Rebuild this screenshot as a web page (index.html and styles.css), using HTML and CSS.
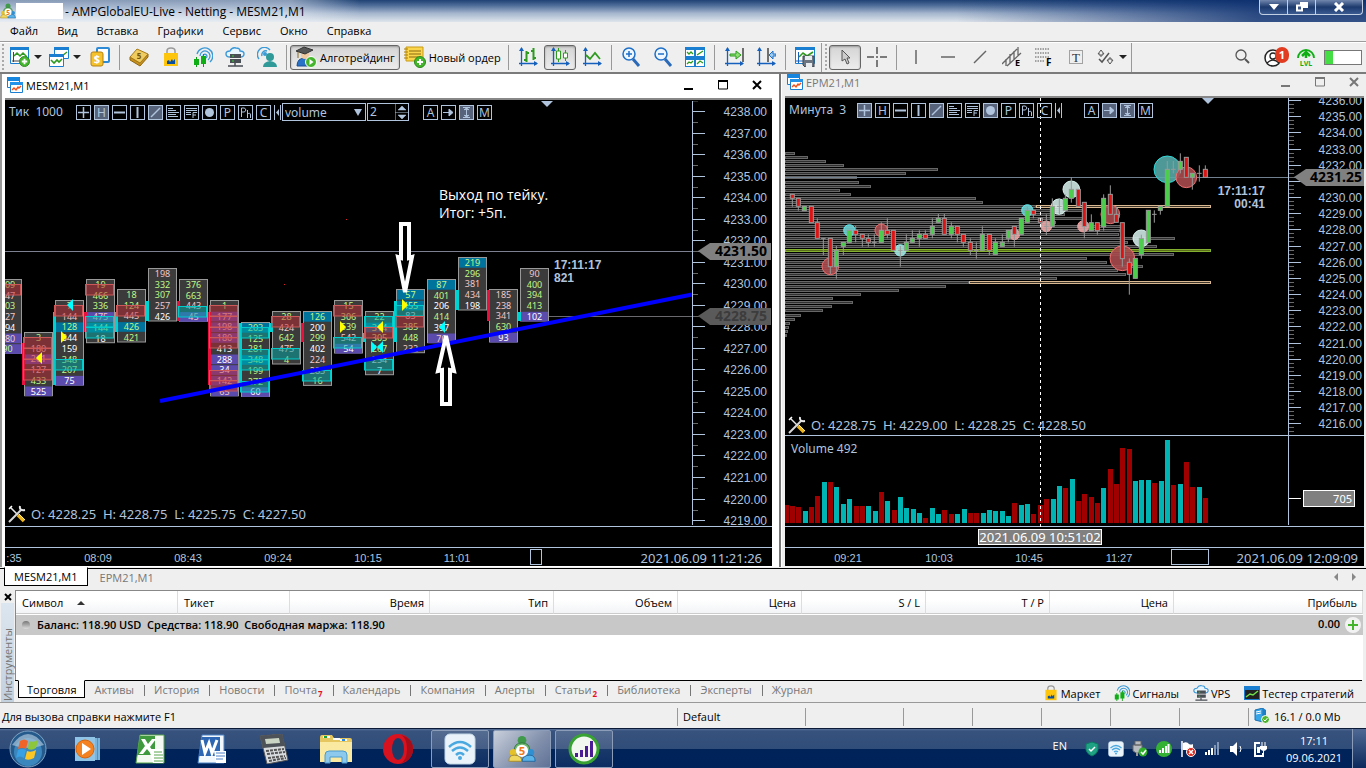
FILE: index.html
```html
<!DOCTYPE html>
<html lang="ru">
<head>
  <meta charset="UTF-8">
  <meta name="viewport" content="width=device-width, initial-scale=1.0">
  <title>AMPGlobalEU-Live - Netting - MESM21,M1</title>
  <link rel="stylesheet" href="styles.css">
</head>
<body>
  <!-- shared icons -->
  <svg class="defs" width="0" height="0">
    <symbol id="i-mt5" viewBox="0 0 32 32">
      <circle cx="16" cy="6" r="5" fill="#3f9a4a"/><path d="M7 18q0-9 9-9t9 9l-4 4H11z" fill="#6db86e" stroke="#2d7538"/>
      <circle cx="6" cy="20" r="4" fill="#e6c22a"/><path d="M1 30q0-7 6-7 8 0 9 7z" fill="#f0d860" stroke="#a8871a"/>
      <circle cx="26" cy="20" r="4" fill="#2f8fd0"/><path d="M31 30q0-7-6-7-8 0-9 7z" fill="#5ab4ea" stroke="#1b649c"/>
      <circle cx="16" cy="18" r="7" fill="#fff"/><text x="16" y="23" font-size="13" font-weight="bold" fill="#f07818" text-anchor="middle">5</text>
    </symbol>
    <symbol id="i-win" viewBox="0 0 16 16">
      <path d="M.5 1.500h12v9H.5z" fill="#fff" stroke="#1a7fd0"/><path d="M0 0h13v4H0z" fill="#1585dd"/>
      <path d="M3.500 5.500h12v10h-12z" fill="#fff" stroke="#1a7fd0"/><path d="M3 5h13v3H3z" fill="#2393ea"/>
      <path d="M5 13l2-2 2 2 2-3 1 1 2-2" fill="none" stroke="#f0501a" stroke-width="1.400"/>
    </symbol>
    <symbol id="i-bag" viewBox="0 0 20 20">
      <path d="M6 8V4q0-3 4-3t4 3v4" fill="none" stroke="#9a9a9a" stroke-width="1.500"/>
      <path d="M3 6h14v13H3z" fill="#fdc50c"/><path d="M6 17v-3l2-1 1 2 2-3 1 2 2-2v5z" fill="#0b4fa0"/>
    </symbol>
    <symbol id="i-signal" viewBox="0 0 20 20">
      <path d="M4 7a8 8 0 1 1 13 8M7 9a5 5 0 1 1 8 4M10 9a2 2 0 1 1 3 2" fill="none" stroke="#3c9ad6" stroke-width="1.300"/>
      <path d="M3.500 10v10M10.500 7v13" stroke="#0a9a12"/><path d="M1 12h5v6H1zM8 9h5v8H8z" fill="#0fae14"/>
    </symbol>
    <symbol id="i-cloud" viewBox="0 0 20 20">
      <path d="M5 10q-4 0-4-3t4-3q2-4 6-3 4 0 4 3 4 0 4 3t-4 3" fill="#e8f5fd" stroke="#3b98d8" stroke-width="1.400"/>
      <path d="M5 7h11v4H5zM5 12h11v4H5z" fill="#4a4f55"/><path d="M7 9h2M7 14h2" stroke="#36d336"/><path d="M10 16v3M3 19h15" stroke="#4a4f55" stroke-width="1.500"/>
    </symbol>
    <symbol id="i-plus" viewBox="0 0 12 12">
      <circle cx="6" cy="6" r="5.500" fill="#45b52e" stroke="#2c8a1c"/><path d="M6 3v6M3 6h6" stroke="#fff" stroke-width="2"/>
    </symbol>
    <symbol id="i-tools" viewBox="0 0 18 18">
      <path d="M2 2l8 8" stroke="#e8e8e8" stroke-width="1.500"/><path d="M10 10l6 6" stroke="#f0b41c" stroke-width="3.500"/><path d="M11 9l6 6" stroke="#fff0a0"/>
      <path d="M1 17L13 5" stroke="#d8d8d8" stroke-width="2"/><path d="M12 1q-1 5 5 4" fill="none" stroke="#e8e8e8" stroke-width="2"/><path d="M1 4l3-3" stroke="#fff" stroke-width="1.500"/>
    </symbol>
    <symbol id="i-wifi" viewBox="0 0 32 32">
      <rect x="1" y="1" width="30" height="30" rx="5" fill="#eaf3fa" stroke="#c3d8e8"/>
      <path d="M5 14q11-10 22 0M8 18q8-7 16 0M12 22q4-4 8 0" fill="none" stroke="#4aa8e0" stroke-width="2.500"/><circle cx="16" cy="25" r="2" fill="#4aa8e0"/>
    </symbol>
    <symbol id="i-level" viewBox="0 0 32 32">
      <circle cx="16" cy="16" r="14" fill="#f2f7ef" stroke="#38a332" stroke-width="3"/>
      <path d="M7 20h3v4H7zM12 17h3v7h-3zM17 13h3v11h-3zM22 8h3v16h-3z" fill="#4a1d96"/>
    </symbol>
    <symbol id="axes" viewBox="0 0 20 20">
      <path d="M3.500 1v18M1 16.500h18" stroke="#1560bd" stroke-width="1.300"/><path d="M1 4l2.500-4L6 4zM16 14l4 2.500-4 2.500z" fill="#1560bd"/>
    </symbol>
  </svg>

  <header class="titlebar">
    <svg class="ico16"><use href="#i-mt5"/></svg>
    <span class="account"></span>
    <span class="caption">- AMPGlobalEU-Live - Netting - MESM21,M1</span>
    <div class="sysbuttons">
      <button aria-label="Свернуть"><svg width="12" height="10"><path d="M1 2h10L6 8z" fill="#fff"/></svg></button>
      <button aria-label="Восстановить"><svg width="12" height="10"><path d="M4 0h8v6H4z" fill="#fff"/><path d="M1 3.500h5v5H1z" fill="#405a88" stroke="#fff" stroke-width="2"/></svg></button>
      <button class="sys-close" aria-label="Закрыть"><svg width="12" height="10"><path d="M2 1l8 8M10 1L2 9" stroke="#fff" stroke-width="3"/></svg></button>
    </div>
  </header>

  <nav class="menu">
    <button>Файл</button>
    <button>Вид</button>
    <button>Вставка</button>
    <button>Графики</button>
    <button>Сервис</button>
    <button>Окно</button>
    <button>Справка</button>
  </nav>

  <div class="toolbar">
    <span class="grip"></span>
    <button class="tool drop" aria-label="Новый график"><svg class="ico20" viewBox="0 0 20 20"><path d="M.5 1.500h18v15H.5z" fill="#fff" stroke="#1a7fd0"/><path d="M0 0h19v3H0z" fill="#1a7fd0"/><path d="M3.500 5v10M2 14h14" stroke="#444"/><path d="M4 9l3-3 3 3 3-3 4 4" fill="none" stroke="#2f9a20" stroke-width="1.500"/><use href="#i-plus" x="9" y="9" width="11" height="11"/></svg><i class="caret"></i></button>
    <button class="tool drop" aria-label="Профили"><svg class="ico20" viewBox="0 0 20 20"><path d="M5.500.5h14v11h-14z" fill="#fff" stroke="#1a7fd0"/><path d="M5 0h15v3H5z" fill="#1a7fd0"/><path d="M13 9l5-4" stroke="#2f9a20" stroke-width="1.500"/><path d="M.5 7.500h14v12H.5z" fill="#fff" stroke="#1a7fd0"/><path d="M0 7h15v3H0z" fill="#1a7fd0"/><path d="M2 13l3 3 3-3 2 2 3-3" fill="none" stroke="#2f9a20" stroke-width="1.600"/></svg><i class="caret"></i></button>
    <button class="tool" aria-label="Обзор рынка"><svg class="ico20" viewBox="0 0 20 20"><rect x="7" y="1" width="12" height="14" rx="1" fill="#fff" stroke="#2e8ad4" stroke-width="2"/><rect x="1" y="5" width="12" height="14" rx="2" fill="#f4c22c" stroke="#b98210"/><text x="7" y="16" font-size="11" font-weight="bold" fill="#fff" text-anchor="middle">$</text></svg></button>
    <span class="sep"></span>
    <button class="tool" aria-label="MQL5"><svg class="ico20" viewBox="0 0 20 20"><path d="M1 13l10 6 8-9v-3l-8 9-10-6z" fill="#c8901c" stroke="#8d6712"/><path d="M1 10l7-8 11 5-8 9z" fill="#f0cc60" stroke="#a87c1a"/><text x="10" y="12" font-size="8" font-weight="bold" fill="#7a5408" text-anchor="middle">5</text></svg></button>
    <button class="tool" aria-label="Маркет"><svg class="ico20"><use href="#i-bag"/></svg></button>
    <button class="tool" aria-label="Сигналы"><svg class="ico20"><use href="#i-signal"/></svg></button>
    <button class="tool" aria-label="VPS"><svg class="ico20"><use href="#i-cloud"/></svg></button>
    <button class="tool" aria-label="Сообщество"><svg class="ico20" viewBox="0 0 20 20"><path d="M2 12A7 7 0 1 1 13 3M5 9a4 4 0 0 1 5-5" fill="none" stroke="#3c9ad6" stroke-width="1.400"/><circle cx="8" cy="7" r="2" fill="#3c9ad6"/><circle cx="13" cy="10" r="4" fill="#2f9a98"/><path d="M6 20q0-5 7-6 7 1 7 6z" fill="#2f9a98"/></svg></button>
    <span class="sep"></span>
    <button class="tool wide on"><svg class="ico22" viewBox="0 0 22 22"><path d="M2 20q0-8 8-8 7 0 7 8z" fill="#2872c8" stroke="#1b4f94"/><circle cx="10" cy="9" r="4" fill="#f0c9a0"/><path d="M1 5l8-4 9 3-8 4z" fill="#555" stroke="#333"/><path d="M3 6v6" stroke="#8a6a20"/><circle cx="16" cy="16" r="5.500" fill="#45b52e" stroke="#fff"/><path d="M14.500 13v6l4-3z" fill="#fff"/></svg>Алготрейдинг</button>
    <button class="tool wide"><svg class="ico22" viewBox="0 0 22 22"><path d="M2 1h17v14H2z" fill="#fbd64c" stroke="#c99a14"/><path d="M5 5h12M5 8h12M5 11h9" stroke="#8a6a10"/><path d="M0 3h4M0 6h4M0 9h4M0 12h4" stroke="#a67c10"/><use href="#i-plus" x="10" y="10" width="12" height="12"/></svg>Новый ордер</button>
    <span class="sep"></span>
    <button class="tool" aria-label="Бары"><svg class="ico20" viewBox="0 0 20 20"><use href="#axes"/><path d="M8.500 4v11M6 13h2.500M8.500 6H11M15.500 1v12M13 4h2.500M15.500 11H18" stroke="#2f9a20" stroke-width="2"/></svg></button>
    <button class="tool on" aria-label="Свечи"><svg class="ico20" viewBox="0 0 20 20"><use href="#axes"/><path d="M8.500 1v14M15.500 3v11" stroke="#2f9a20"/><path d="M6.500 4h4v8h-4zM13.500 6h4v5h-4z" fill="#fff" stroke="#2f9a20"/></svg></button>
    <button class="tool" aria-label="Линия"><svg class="ico20" viewBox="0 0 20 20"><use href="#axes"/><path d="M4 8l4 4 5-6 5 6" fill="none" stroke="#2f9a20" stroke-width="1.800"/></svg></button>
    <span class="sep"></span>
    <button class="tool" aria-label="Увеличить"><svg class="ico20" viewBox="0 0 20 20"><path d="M12 12l6 7" stroke="#2a6ab8" stroke-width="3"/><circle cx="8" cy="7" r="6" fill="#eef7ff" stroke="#1e6fc8" stroke-width="1.500"/><path d="M8 4v6M5 7h6" stroke="#1e6fc8" stroke-width="1.500"/></svg></button>
    <button class="tool" aria-label="Уменьшить"><svg class="ico20" viewBox="0 0 20 20"><path d="M12 12l6 7" stroke="#2a6ab8" stroke-width="3"/><circle cx="8" cy="7" r="6" fill="#eef7ff" stroke="#1e6fc8" stroke-width="1.500"/><path d="M5 7h6" stroke="#1e6fc8" stroke-width="1.500"/></svg></button>
    <button class="tool" aria-label="Плитка"><svg class="ico20" viewBox="0 0 20 20"><path d="M0 0h20v20H0z" fill="#1a7fd0"/><path d="M1 3h8v6H1zM11 3h8v6h-8zM1 13h8v6H1zM11 13h8v6h-8z" fill="#fff"/><path d="M2 5l2 2 2-2 2 2M12 8l3-2 3-2M2 17l2-2 2 1 2-2M12 17l3-3 3 2" fill="none" stroke="#2f9a20" stroke-width="1.300"/></svg></button>
    <span class="sep"></span>
    <button class="tool" aria-label="Автопрокрутка"><svg class="ico20" viewBox="0 0 20 20"><use href="#axes"/><path d="M19 1v14" stroke="#444" stroke-width="1.500"/><path d="M6 7h6V4l5 4-5 4V9H6z" fill="#8be070" stroke="#2f9a20"/></svg></button>
    <button class="tool" aria-label="Сдвиг графика"><svg class="ico20" viewBox="0 0 20 20"><use href="#axes"/><path d="M12 1v14" stroke="#444" stroke-width="1.500"/><path d="M20 7h-3V4l-4 4 4 4V9h3z" fill="#9cccf4" stroke="#1e6fc8"/></svg></button>
    <span class="sep"></span>
    <button class="tool" aria-label="Шаблоны"><svg class="ico20" viewBox="0 0 20 20"><path d="M.5 1.500h19v15H.5z" fill="#fff" stroke="#1a7fd0"/><path d="M0 0h20v3H0z" fill="#1a7fd0"/><path d="M3.500 5v11M1 14h8" stroke="#1560bd"/><path d="M4 10l4-4 4 3 6-4" fill="none" stroke="#2f9a20" stroke-width="1.600"/><path d="M8 9h11v11H10l-2-2z" fill="#6d7680" stroke="#3e464d"/><path d="M10 9h7v4h-7zM11 16h6v4h-6z" fill="#e8ecef"/></svg></button>
    <span class="bar-end"></span>
    <span class="grip"></span>
    <button class="tool on" aria-label="Курсор"><svg class="ico20" viewBox="0 0 20 20"><path d="M7 3v11l3-2 2 5 2-1-2-5h3z" fill="#ccc" stroke="#555"/></svg></button>
    <button class="tool" aria-label="Перекрестие"><svg class="ico20" viewBox="0 0 20 20"><path d="M10 0v7M10 13v7M0 10h7M13 10h7M9 10h2" stroke="#555" stroke-width="1.500"/></svg></button>
    <span class="sep"></span>
    <button class="tool" aria-label="Вертикальная линия"><svg class="ico20" viewBox="0 0 20 20"><path d="M10 3v14" stroke="#666" stroke-width="1.500"/></svg></button>
    <button class="tool" aria-label="Горизонтальная линия"><svg class="ico20" viewBox="0 0 20 20"><path d="M3 10h14" stroke="#666" stroke-width="1.500"/></svg></button>
    <button class="tool" aria-label="Трендовая линия"><svg class="ico20" viewBox="0 0 20 20"><path d="M4 16L16 4" stroke="#666" stroke-width="1.500"/></svg></button>
    <button class="tool" aria-label="Канал"><svg class="ico20" viewBox="0 0 20 20"><path d="M0 17L15 2M5 19L19 6M4 12v7M8 7v9M12 4v8M16 0v8" stroke="#666" stroke-width="1.300"/><text x="13" y="19" font-size="9" font-weight="bold">E</text></svg></button>
    <button class="tool" aria-label="Фибоначчи"><svg class="ico20" viewBox="0 0 20 20"><path d="M1 2h15M1 6h15M1 10h15M1 14h9" stroke="#555" stroke-dasharray="1.500 1"/><text x="12" y="19" font-size="10" font-weight="bold">F</text></svg></button>
    <button class="tool" aria-label="Текст"><svg class="ico20" viewBox="0 0 20 20"><path d="M3.500 3.500h13v13h-13z" fill="none" stroke="#555" stroke-dasharray="1 1"/><text x="10" y="15" font-size="13" font-family="Liberation Serif" text-anchor="middle" fill="#333">T</text></svg></button>
    <button class="tool drop" aria-label="Объекты"><svg class="ico20" viewBox="0 0 20 20"><path d="M6 3l3 4H7v2H5V7H3zM15 17l-3-4h2v-2h2v2h2z" fill="#eee" stroke="#555"/><path d="M4 12l3 3 7-9" fill="none" stroke="#555" stroke-width="1.500"/></svg><i class="caret"></i></button>
    <span class="bar-end"></span>
    <span class="spacer"></span>
    <button class="tool" aria-label="Поиск"><svg class="ico20" viewBox="0 0 20 20"><circle cx="9" cy="8" r="5" fill="none" stroke="#555" stroke-width="1.300"/><path d="M13 12l4 4" stroke="#555" stroke-width="2"/></svg></button>
    <button class="tool notify"><svg class="ico20" viewBox="0 0 20 20"><circle cx="9" cy="11" r="8" fill="#fff" stroke="#222" stroke-width="1.500"/><circle cx="9" cy="9" r="3" fill="none" stroke="#222" stroke-width="1.300"/><path d="M3 16q6-6 12 0" fill="none" stroke="#222" stroke-width="1.300"/></svg><span class="badge">1</span></button>
    <button class="tool" aria-label="Уровень"><svg class="ico20" viewBox="0 0 20 20"><path d="M2 11a8 8 0 1 1 16 0" fill="none" stroke="#0fae14" stroke-width="1.800"/><path d="M10 11V6M6 9l4-4 4 4" fill="none" stroke="#0fae14" stroke-width="2.500"/><text x="10" y="19" font-size="7" font-weight="bold" fill="#0fae14" text-anchor="middle">LVL</text></svg></button>
    <span class="battery"><i></i></span>
  </div>

  <main class="workspace">
    <section class="window active">
      <div class="window-title">
        <svg class="ico16"><use href="#i-win"/></svg><span>MESM21,M1</span>
        <div class="window-buttons">
          <button aria-label="Свернуть"><svg width="12" height="12"><path d="M1 10h9" stroke="currentColor" stroke-width="2"/></svg></button>
          <button aria-label="Развернуть"><svg width="12" height="12"><path d="M1.500 1v9h9V1" fill="none" stroke="currentColor"/><path d="M1 2h10" stroke="currentColor" stroke-width="2"/></svg></button>
          <button aria-label="Закрыть"><svg width="12" height="12"><path d="M2 2l8 8M10 2l-8 8" stroke="currentColor" stroke-width="2"/></svg></button>
        </div>
      </div>
      <div class="chart">
        <svg id="cluster" viewBox="5 100 767 466" preserveAspectRatio="xMinYMin meet"></svg>
        <div class="chart-tools">
          <span class="period tick">Тик&nbsp; 1000</span>
          <span class="tool-set" data-on="1 4"></span>
          <span class="indicator"><select aria-label="Индикатор"><option>volume</option></select></span>
          <span class="stepper"><input type="text" value="2" aria-label="Значение"><svg width="13" height="17"><path d="M.5 0v17M0 8.500h13M3 6h8L7 2zM3 11h8l-4 4z" fill="#b0c4de" stroke="#b0c4de" stroke-width=".5"/></svg></span>
          <span class="tool-set mode" data-on="13"></span>
        </div>
        <div class="ohlc"><svg class="ico18"><use href="#i-tools"/></svg><span>O: 4228.25&nbsp; H: 4228.75&nbsp; L: 4225.75&nbsp; C: 4227.50</span></div>
      </div>
    </section>

    <section class="window">
      <div class="window-title">
        <svg class="ico16"><use href="#i-win"/></svg><span>EPM21,M1</span>
        <div class="window-buttons">
          <button aria-label="Свернуть"><svg width="12" height="12"><path d="M1 10h9" stroke="currentColor" stroke-width="2"/></svg></button>
          <button aria-label="Развернуть"><svg width="12" height="12"><path d="M1.500 1v9h9V1" fill="none" stroke="currentColor"/><path d="M1 2h10" stroke="currentColor" stroke-width="2"/></svg></button>
          <button aria-label="Закрыть"><svg width="12" height="12"><path d="M2 2l8 8M10 2l-8 8" stroke="currentColor" stroke-width="2"/></svg></button>
        </div>
      </div>
      <div class="chart">
        <svg id="candles" viewBox="785 98 579 468" preserveAspectRatio="xMinYMin meet"></svg>
        <div class="chart-tools">
          <span class="period minute">Минута&nbsp; 3</span>
          <span class="tool-set" data-on="0 4 7"></span>
          <span class="tool-set mode" data-on="12 13"></span>
        </div>
        <div class="ohlc raised"><svg class="ico18"><use href="#i-tools"/></svg><span>O: 4228.75&nbsp; H: 4229.00&nbsp; L: 4228.25&nbsp; C: 4228.50</span></div>
      </div>
    </section>
  </main>

  <div class="chart-tabs">
    <button class="current">MESM21,M1</button>
    <button>EPM21,M1</button>
    <span class="scroll"><i class="left"></i><i class="right"></i></span>
  </div>

  <section class="terminal">
    <aside class="side">
      <button aria-label="Закрыть"><svg width="8" height="8"><path d="M1 1l6 6M7 1L1 7" stroke="#000" stroke-width="2"/></svg></button>
      <span>Инструменты</span>
    </aside>
    <div class="terminal-body">
      <div class="table-area">
        <table>
          <colgroup><col class="w-symbol"><col class="w-ticket"><col class="w-time"><col class="w-std"><col class="w-std"><col class="w-std"><col class="w-std"><col class="w-std"><col class="w-std"><col></colgroup>
          <thead>
            <tr><th class="start">Символ<i class="sort"></i></th><th class="start">Тикет</th><th>Время</th><th>Тип</th><th>Объем</th><th>Цена</th><th>S / L</th><th>T / P</th><th>Цена</th><th>Прибыль</th></tr>
          </thead>
          <tbody>
            <tr><td colspan="9"><i class="dot"></i>Баланс: 118.90 USD&nbsp; Средства: 118.90&nbsp; Свободная маржа: 118.90</td><td class="profit">0.00<svg width="16" height="16"><circle cx="8" cy="8" r="8" fill="#f2f2f2"/><path d="M8 3v10M3 8h10" stroke="#45b52e" stroke-width="2"/></svg></td></tr>
          </tbody>
        </table>
      </div>
      <div class="terminal-tabs">
        <button class="current">Торговля</button>
        <button>Активы</button>
        <button>История</button>
        <button>Новости</button>
        <button>Почта<sub>7</sub></button>
        <button>Календарь</button>
        <button>Компания</button>
        <button>Алерты</button>
        <button>Статьи<sub>2</sub></button>
        <button>Библиотека</button>
        <button>Эксперты</button>
        <button>Журнал</button>
        <div class="services">
          <a href="#"><svg class="ico16"><use href="#i-bag"/></svg>Маркет</a>
          <a href="#"><svg class="ico16"><use href="#i-signal"/></svg>Сигналы</a>
          <a href="#"><svg class="ico16"><use href="#i-cloud"/></svg>VPS</a>
          <a href="#"><svg class="ico16" viewBox="0 0 16 16"><path d="M0 1h16v14H0z" fill="#1a7fd0"/><path d="M1 5h14v9H1z" fill="#222"/><path d="M2 12l4-3 3 1 5-4" fill="none" stroke="#6fe04a" stroke-width="1.500"/></svg>Тестер стратегий</a>
        </div>
      </div>
    </div>
  </section>

  <footer class="status">
    <span class="help">Для вызова справки нажмите F1</span>
    <span class="profile">Default</span>
    <span class="cell-l"></span>
    <span class="cell-s"></span>
    <span class="cell-s"></span>
    <span class="cell-s"></span>
    <span class="cell-s"></span>
    <span class="cell-s"></span>
    <span class="traffic"><svg class="ico16" viewBox="0 0 16 16"><path d="M1 2l8-2v14l-8-2z" fill="#35a4e8" stroke="#1b6fb0"/><path d="M9 0l3 2v12l-3 1z" fill="#1b7ec8"/><path d="M2 4l5-1M2 6l5-1" stroke="#fff"/><circle cx="11.500" cy="11.500" r="4" fill="#4fb52e" stroke="#fff"/><path d="M9.500 11.500l1.500 1.500 2.500-3" fill="none" stroke="#fff"/></svg>16.1 / 0.0 Mb</span>
  </footer>

  <div class="taskbar">
    <button class="task start" aria-label="Пуск"><svg width="38" height="38" viewBox="0 0 38 38"><circle cx="19" cy="19" r="18" fill="#245a8c" stroke="#7ea3c4"/><circle cx="19" cy="22" r="14" fill="#3b87bd"/><path d="M3 15q16-22 32 0-16 6-32 0z" fill="#a9c4da" opacity=".7"/><path d="M11 11q4-3 8 0l-2 8q-4-2-8 0z" fill="#f0642a"/><path d="M20 11q4 2 9-1l-2 8q-4 3-8 1z" fill="#8cc63a"/><path d="M9 20q4-2 8 0l-2 8q-4-3-8 0z" fill="#38a0e4"/><path d="M18 21q4 2 9-1l-2 8q-5 3-9 1z" fill="#fcc624"/></svg></button>
    <button class="task" aria-label="Проигрыватель"><svg width="28" height="28" viewBox="0 0 28 28"><path d="M8 3h18v22H8z" fill="#4b93c8"/><path d="M22 3v22M25 3v22" stroke="#a8d4f0"/><path d="M1 2h20v24H1z" fill="#8fc4e6"/><circle cx="11" cy="14" r="9" fill="#f58220" stroke="#d8640c"/><path d="M8 8v12l9-6z" fill="#fff"/></svg></button>
    <button class="task" aria-label="Excel"><svg width="30" height="30" viewBox="0 0 30 30"><path d="M5 1h24v28H1z" fill="#f4faf2" stroke="#58a54a"/><path d="M5 2h15v19H2z" fill="#3e9a3c"/><path d="M6 5l4 0 3 5 4-5h4l-6 8 5 7h-4l-4-5-4 5H4l6-8z" fill="#fff"/><path d="M14 15h14v14H18z" fill="#fff"/><path d="M19 18h8M19 21h9M19 24h9M19 27h9" stroke="#58a54a"/></svg></button>
    <button class="task" aria-label="Word"><svg width="30" height="30" viewBox="0 0 30 30"><path d="M5 1h22v28H1z" fill="#f2f7fc" stroke="#4a80c4"/><path d="M5 3h18v19H2z" fill="#2d66b2"/><path d="M5 6l3 13 4-10 3 10 5-13" fill="none" stroke="#fff" stroke-width="3"/><path d="M17 17h12v12H19z" fill="#fff"/><path d="M19 19h9M19 22h9M19 25h7" stroke="#4a80c4"/></svg></button>
    <button class="task" aria-label="Калькулятор"><svg width="30" height="30" viewBox="0 0 30 30"><path d="M1 2l22-2 6 26-21 4z" fill="#d9dcde" stroke="#555"/><path d="M1 2l22-2 3 12-22 2z" fill="#4c5257"/><path d="M6 5l14-1 1 5-14 1z" fill="#c9d4c4"/><path d="M7 17l18-2M8 20l18-2M9 24l17-2M10 27l17-3" stroke="#555" stroke-width="2" stroke-dasharray="3 1"/></svg></button>
    <button class="task" aria-label="Проводник"><svg width="32" height="30" viewBox="0 0 32 30"><path d="M0 3q0-2 2-2h10l2 3h16q2 0 2 2v21H0z" fill="#e6c65e"/><path d="M3 3h7M13 5h7M20 6h7" stroke="#fff" stroke-width="2"/><path d="M4 3h3" stroke="#17a336" stroke-width="2"/><path d="M22 6h3" stroke="#2a8be0" stroke-width="2"/><path d="M0 8h32v20H0z" fill="#fae9a0"/><path d="M5 29v-8q0-4 4-4h14q4 0 4 4v8h-5v-6H10v6z" fill="#8cc9ec" stroke="#4b9bd0"/></svg></button>
    <button class="task" aria-label="Opera"><svg width="30" height="30" viewBox="0 0 30 30"><ellipse cx="15" cy="15" rx="15" ry="15" fill="#d8121f"/><ellipse cx="15" cy="15" rx="6" ry="11" fill="#1c3a68"/><path d="M18 1q12 3 12 14T18 29q6-3 6-14T18 1z" fill="#a70d18"/></svg></button>
    <button class="task open" aria-label="Wi-Fi"><svg width="32" height="32"><use href="#i-wifi"/></svg></button>
    <button class="task open focus" aria-label="MetaTrader 5"><svg width="28" height="28"><use href="#i-mt5"/></svg></button>
    <button class="task open" aria-label="Signal"><svg width="32" height="32"><use href="#i-level"/></svg></button>
    <div class="tray">
      <span class="lang">EN</span>
      <svg class="ico16" viewBox="0 0 16 16"><path d="M8 1l6 2v6q-1 4-6 6-5-2-6-6V3z" fill="#1fa184" stroke="#0d7a62"/><path d="M5 8l2 2 4-4" fill="none" stroke="#fff" stroke-width="1.500"/></svg>
      <svg class="ico16"><use href="#i-wifi"/></svg>
      <svg class="ico16" viewBox="0 0 16 16"><path d="M3 0h6v4H3zM1 4h9v6q-4 4-9 0z" fill="#b8bcc0" stroke="#666"/><path d="M5 11v4" stroke="#999" stroke-width="2"/><circle cx="11" cy="11" r="4.500" fill="#2fae2c"/><path d="M9 11l2 2 3-4" fill="none" stroke="#fff" stroke-width="1.500"/></svg>
      <svg class="ico16" viewBox="0 0 16 16"><circle cx="8" cy="8" r="8" fill="#35b233"/><path d="M4 9v3M7 7v5M10 5v7M12.500 3v9" stroke="#fff" stroke-width="2"/></svg>
      <svg class="ico16" viewBox="0 0 16 16"><path d="M2 0v16" stroke="#fff" stroke-width="1.500"/><path d="M3 2q4-2 6 1 2 1 4 0v6H3z" fill="#fff"/><circle cx="11" cy="11" r="4.500" fill="#d8281c" stroke="#fff"/><path d="M9 9l4 4M13 9l-4 4" stroke="#fff" stroke-width="1.500"/></svg>
      <svg class="ico16" viewBox="0 0 16 16"><path d="M2 11v3M5 9v5M8 7v7" stroke="#fff" stroke-width="2"/><path d="M11 4v10M14 1v13" stroke="#8296b5" stroke-width="2"/></svg>
      <svg class="ico16" viewBox="0 0 16 16"><path d="M2 5h3l4-4v14l-4-4H2z" fill="#fff"/><path d="M12 5q2 3 0 6" fill="none" stroke="#fff"/></svg>
      <svg class="ico16" viewBox="0 0 16 16"><path d="M8 2H3v13h8v-3" fill="none" stroke="#fff" stroke-width="2"/><path d="M5 6h3v6H5z" fill="#fff"/><path d="M10 1v4M13 1v4" stroke="#fff"/><path d="M8 5h7v3q-3 4-7 0zM11 9h1v5h-1z" fill="#fff"/></svg>
      <span class="clock">17:11<br>09.06.2021</span>
    </div>
    <button class="show-desktop" aria-label="Показать рабочий стол"></button>
  </div>

  <script src="script.js"></script>
</body>
</html>
```
FILE: styles.css
```css
* {
  box-sizing: border-box;
}
body {
  margin: 0;
  height: 100vh;
  display: flex;
  flex-direction: column;
  overflow: hidden;
  background: #efefef;
  color: #000;
  font-family: "Open Sans", "Noto Sans", sans-serif;
  font-size: 11px;
}
button {
  font: inherit;
  color: inherit;
  background: none;
  border: 0;
  padding: 0;
}
a {
  color: inherit;
  text-decoration: none;
}
svg {
  flex: none;
}
.defs {
  position: absolute;
}
.ico16 {
  width: 16px;
  height: 16px;
}
.ico18 {
  width: 18px;
  height: 18px;
}
.ico20 {
  width: 20px;
  height: 20px;
}
.ico22 {
  width: 22px;
  height: 22px;
}
.spacer {
  flex: 1;
}

/* title bar */
.titlebar {
  display: flex;
  align-items: center;
  height: 22px;
  flex: none;
  font-size: 12px;
  background: linear-gradient(90deg, rgba(240, 244, 250, .5) 0, rgba(240, 244, 250, .5) 290px, rgba(240, 244, 250, 0) 360px, transparent 70%, rgba(10, 45, 110, .8) 92%), linear-gradient(#1f4274 0, #4f6d99 25%, #a4b5cd 60%, #dfe5ec 100%);
}
.account {
  width: 47px;
  height: 16px;
  background: #fff;
}
.caption {
  margin-left: 2px;
}
.sysbuttons {
  display: flex;
  align-self: flex-start;
  margin: 0 3px 0 auto;
  height: 15px;
  border: 1px solid #c3cfe2;
  border-top: 0;
  border-radius: 0 0 4px 4px;
  background: linear-gradient(#7187ad, #1d3a6e 50%, #3a5a90);
}
.sysbuttons button {
  width: 28px;
  display: flex;
  align-items: center;
  justify-content: center;
  border-right: 1px solid #c3cfe2;
}
.sysbuttons .sys-close {
  width: 46px;
  border-right: 0;
}

/* menu */
.menu {
  display: flex;
  gap: 19px;
  height: 20px;
  flex: none;
  padding: 0 0 2px 10px;
  border-bottom: 1px solid #9c9c9c;
}

/* main toolbar */
.toolbar {
  display: flex;
  align-items: center;
  height: 32px;
  flex: none;
  padding-bottom: 1px;
  border-top: 1px solid #fff;
  border-bottom: 2px solid #7b7b7b;
}
.grip {
  width: 3px;
  height: 26px;
  margin: 0 1px 0 2px;
  border-left: 2px dotted #aaa;
}
.tool {
  display: flex;
  align-items: center;
  justify-content: center;
  width: 32px;
  height: 25px;
}
.tool.drop {
  width: 39px;
  gap: 4px;
}
.tool.wide {
  width: auto;
  gap: 3px;
  padding: 0 4px;
}
.tool.on {
  border: 1px solid #666;
  border-radius: 3px;
  background: linear-gradient(#d4d4d4, #ececec);
  box-shadow: inset 0 1px 2px #999;
}
.caret {
  border: 4px solid transparent;
  border-top-color: #222;
  border-bottom: 0;
}
.sep {
  width: 1px;
  height: 25px;
  margin: 0 3px;
  background: #999;
}
.bar-end {
  width: 2px;
  height: 29px;
  border-left: 1px solid #999;
}
.notify {
  position: relative;
}
.badge {
  position: absolute;
  top: 2px;
  right: 1px;
  width: 14px;
  height: 16px;
  line-height: 16px;
  border-radius: 8px;
  background: #e23c20;
  color: #fff;
  font-weight: bold;
}
.battery {
  width: 38px;
  height: 15px;
  margin: 0 4px 0 2px;
  border: 1px solid #777;
  background: #fff;
}
.battery i {
  display: block;
  width: 8px;
  height: 13px;
  background: #44dd44;
}

/* chart windows */
.workspace {
  flex: 1;
  display: grid;
  grid-template-columns: 781fr 585fr;
  min-height: 0;
}
.window {
  display: flex;
  flex-direction: column;
  min-width: 0;
  min-height: 0;
  padding: 0 2px 1px 3px;
  color: #777;
  border-left: 1px solid #fff;
}
.window.active {
  padding: 2px 7px 1px 3px;
  background: #fff;
  color: #000;
  border-left: 2px solid #999;
  border-right: 2px solid #777;
}
.window-title {
  display: flex;
  align-items: center;
  height: 22px;
  flex: none;
  padding: 0 0 6px 2px;
}
.active .window-title {
  padding-bottom: 4px;
}
.window-title span {
  margin-left: 3px;
}
.window-buttons {
  display: flex;
  gap: 22px;
  margin: 0 4px 0 auto;
}
.active .window-buttons {
  margin-right: 9px;
}
.window-buttons button {
  width: 12px;
  height: 12px;
  display: flex;
}
.chart {
  position: relative;
  flex: 1;
  min-height: 0;
  border-top: 2px solid #888;
  background: #000;
  color: #b0c4de;
  overflow: hidden;
  font-family: "Noto Sans", "Open Sans", sans-serif;
  font-size: 13px;
}
.active .chart {
  margin-top: 0;
}
.chart > svg {
  display: block;
  width: 100%;
  height: 100%;
}
.chart-tools {
  position: absolute;
  top: 3px;
  left: 4px;
  height: 18px;
  display: flex;
  align-items: center;
  line-height: 18px;
  font-size: 12px;
}
.tick {
  width: 67px;
}
.minute {
  width: 68px;
}
.tool-set {
  display: flex;
  gap: 3px;
}
.tool-set button {
  width: 15px;
  height: 15px;
  line-height: 13px;
  border: 1px solid #b0c4de;
}
.tool-set button.on {
  background: #56637a;
}
.tool-set svg {
  display: block;
  width: 13px;
  height: 13px;
}
.tool-set .fold {
  width: 7px;
  border-width: 0 1px;
}
.tool-set .fold svg {
  width: 5px;
}
.mode {
  margin-left: 22px;
}
.stepper + .mode {
  margin-left: 14px;
}
.indicator {
  position: relative;
  margin-left: 1px;
}
.indicator::after {
  content: "";
  position: absolute;
  right: 4px;
  top: 6px;
  border: 4px solid transparent;
  border-top: 7px solid #b0c4de;
  border-bottom: 0;
}
.indicator select {
  display: block;
  appearance: none;
  width: 84px;
  height: 18px;
  padding: 0 2px;
  border: 1px solid #b0c4de;
  border-radius: 0;
  background: #000;
  color: inherit;
  font: inherit;
}
.stepper {
  display: flex;
  margin-left: 1px;
  border: 1px solid #b0c4de;
  height: 18px;
}
.stepper input {
  width: 27px;
  padding: 0 2px;
  border: 0;
  background: #000;
  color: inherit;
  font: inherit;
}
.ohlc {
  position: absolute;
  left: 3px;
  bottom: 42px;
  height: 20px;
  display: flex;
  align-items: center;
  gap: 5px;
}
.ohlc.raised {
  bottom: 131px;
}

/* chart drawing */
.price-label {
  font: 12px "Liberation Sans", sans-serif;
  fill: #b0c4de;
  text-anchor: end;
}
.time-label {
  font: 11px "Liberation Sans", sans-serif;
  fill: #b0c4de;
  text-anchor: middle;
}
.date-label {
  fill: #b0c4de;
  text-anchor: end;
}
.countdown {
  font: bold 12px "Liberation Sans", sans-serif;
  fill: #b0c4de;
}
.tag-label {
  font: bold 14px "Noto Sans", sans-serif;
  text-anchor: end;
}
.cell {
  font: 9px "Noto Sans", sans-serif;
  text-anchor: middle;
}
.note {
  font: 14px "Open Sans", sans-serif;
  fill: #fff;
}

/* chart tabs */
.chart-tabs {
  display: flex;
  height: 19px;
  flex: none;
  padding-left: 4px;
  color: #777;
  background: linear-gradient(#000, #000) 0 1px / 100% 1px no-repeat;
}
.chart-tabs button {
  padding: 0 12px;
  border-top: 1px solid transparent;
}
.chart-tabs .current {
  padding: 0 9px;
  background: #fff;
  color: #000;
  border: 1px solid #000;
  border-top-color: #fff;
}
.scroll {
  display: flex;
  gap: 14px;
  align-items: center;
  margin: 0 10px 0 auto;
}
.scroll i {
  border: 4px solid transparent;
}
.scroll .left {
  border-right-color: #888;
  border-left: 0;
}
.scroll .right {
  border-left-color: #888;
  border-right: 0;
}

/* terminal */
.terminal {
  display: flex;
  height: 117px;
  flex: none;
  padding-top: 4px;
  border-bottom: 1px solid #999;
}
.side {
  display: flex;
  flex-direction: column;
  align-items: center;
  width: 15px;
  color: #777;
}
.side button {
  height: 13px;
  line-height: 8px;
}
.side span {
  flex: 1;
  width: 13px;
  line-height: 13px;
  writing-mode: vertical-rl;
  transform: rotate(180deg);
  padding-top: 1px;
  background: linear-gradient(#c3d0de, #dce6f0);
}
.terminal-body {
  flex: 1;
  display: flex;
  flex-direction: column;
  min-width: 0;
}
.table-area {
  flex: 1;
  margin-right: 3px;
  background: #fff;
  border-top: 1px solid #888;
  border-left: 1px solid #888;
}
table {
  width: 100%;
  table-layout: fixed;
  border-collapse: separate;
  border-spacing: 0;
}
th {
  height: 23px;
  padding: 0 5px;
  font-weight: normal;
  text-align: right;
  background: linear-gradient(#fff 40%, #f2f4f6);
  border-right: 1px solid #ddd;
  border-bottom: 1px solid #ccc;
}
th.start {
  text-align: left;
  padding-left: 6px;
}
td {
  height: 21px;
  padding: 0 0 1px 6px;
  font-weight: 600;
  background: #c8c8c8;
  border-top: 1px solid #fff;
}
.profit {
  text-align: right;
  padding-right: 2px;
}
.profit svg {
  vertical-align: middle;
  margin-left: 5px;
}
.w-symbol {
  width: 162px;
}
.w-ticket {
  width: 112px;
}
.w-time {
  width: 140px;
}
.w-std {
  width: 124px;
}
.sort {
  display: inline-block;
  margin-left: 14px;
  vertical-align: 2px;
  border: 4px solid transparent;
  border-bottom-color: #333;
  border-top: 0;
}
.dot {
  display: inline-block;
  width: 8px;
  height: 8px;
  margin-right: 7px;
  border-radius: 4px;
  background: linear-gradient(#777, #ddd);
}
.terminal-tabs {
  display: flex;
  align-items: flex-start;
  height: 22px;
  margin: 0 4px 0 0;
  padding-left: 3px;
  border-top: 1px solid #000;
  color: #777;
}
.terminal-tabs button {
  height: 17px;
  padding: 0 10px 0 9px;
  white-space: nowrap;
}
.terminal-tabs button + button + button {
  padding-left: 10px;
  background: linear-gradient(#777, #777) 0 4px / 1px 11px no-repeat;
}
.terminal-tabs .current {
  height: 18px;
  margin-top: -1px;
  padding: 0 8px;
  color: #000;
  background: #fff;
  border: 1px solid #000;
  border-top-color: #fff;
}
.terminal-tabs sub {
  margin-left: 1px;
  font-size: 8px;
  font-weight: bold;
  line-height: 0;
  color: #e8101c;
}
.services {
  display: flex;
  gap: 14px;
  margin: 4px 8px 0 auto;
  color: #000;
}
.services a {
  display: flex;
  align-items: center;
  gap: 2px;
}

/* status bar */
.status {
  display: flex;
  align-items: center;
  height: 25px;
  flex: none;
  padding-top: 3px;
}
.status span {
  height: 18px;
  line-height: 18px;
  padding-left: 5px;
  border-left: 1px solid #999;
}
.status .help {
  flex: 1;
  padding-left: 2px;
  border-left: 0;
}
.status .profile {
  width: 128px;
}
.status .cell-l {
  width: 98px;
}
.status .cell-s {
  width: 69px;
}
.status .traffic {
  display: flex;
  gap: 4px;
  width: 118px;
}

/* taskbar */
.taskbar {
  display: flex;
  align-items: center;
  height: 40px;
  flex: none;
  border-top: 1px solid #0c1b38;
  background: linear-gradient(#5a7299 0, #36527d 2px, #304c78 20px, #00235a 20px, #00225a 100%);
  color: #fff;
}
.task {
  display: flex;
  align-items: center;
  justify-content: center;
  width: 58px;
  height: 38px;
  margin-right: 4px;
}
.task.start {
  width: 55px;
}
.task.open {
  border: 1px solid #8c9db9;
  border-radius: 2px;
  background: linear-gradient(rgba(255, 255, 255, .15), rgba(255, 255, 255, .05));
}
.task.focus {
  background: linear-gradient(135deg, #c9d0dc, #8290ac 60%, #5f7297);
}
.tray {
  display: flex;
  align-items: center;
  gap: 8px;
  margin-left: auto;
}
.lang {
  margin-right: 9px;
  margin-bottom: 6px;
}
.clock {
  width: 66px;
  margin-left: 5px;
  line-height: 17px;
  text-align: center;
}
.show-desktop {
  width: 14px;
  height: 39px;
  margin-left: 5px;
  border-left: 1px solid #8c9db9;
  background: linear-gradient(#4f6994, #0c2a5c);
}
```
FILE: script.js
```js
// small helper: append an SVG element to a parent
function add(parent, name, attrs, text) {
  const el = document.createElementNS("http://www.w3.org/2000/svg", name);
  for (const key in attrs) el.setAttribute(key, attrs[key]);
  if (text !== undefined) el.textContent = text;
  parent.appendChild(el);
  return el;
}
function rect(parent, x, y, width, height, fill, stroke) {
  return add(parent, "rect", { x, y, width, height, fill, stroke: stroke || "none" });
}
function line(parent, x1, y1, x2, y2, stroke, width) {
  return add(parent, "line", { x1, y1, x2, y2, stroke, "stroke-width": width || 1 });
}

const AXIS = "#b0c4de";

// ---- buttons over the charts ----
const icons = [
  '<path d="M6.500 1v11M1 6.500h11" stroke="#b0c4de" stroke-width="1.500"/>', "H",
  '<path d="M1 6.500h11" stroke="#b0c4de" stroke-width="2"/>',
  '<path d="M6.500 1v11" stroke="#b0c4de" stroke-width="2"/>',
  '<path d="M2 11l9-9" stroke="#b0c4de" stroke-width="1.500"/>',
  '<path d="M1 2.500h5M1 4.500h8M1 6.500h11M1 8.500h8M1 10.500h10" stroke="#b0c4de"/>',
  '<path d="M1 2.500h11M1 4.500h11M1 6.500h5M1 8.500h5M8 12V6.500h4M8 9h3" stroke="#b0c4de" fill="none"/>',
  '<circle cx="6.500" cy="6.500" r="4.500" fill="#b0c4de"/>', "P",
  '<path d="M2.500 11V2h3q3 2 0 4h-3M8.500 4v8M8.500 8q3-2 3 1v3" stroke="#b0c4de" fill="none"/>', "C",
  "A",
  '<path d="M1 6.500h9M7 3l4 3.500L7 10z" stroke="#b0c4de" fill="#b0c4de"/>',
  '<path d="M3 1.500h7M3 11.500h7M6.500 2v9M4 4l2.500-2L9 4M4 9l2.500 2L9 9" stroke="#b0c4de" fill="#b0c4de"/>', "M"
];
document.querySelectorAll(".tool-set").forEach(set => {
  const on = set.dataset.on.split(" ").map(Number);
  const mode = set.classList.contains("mode");
  icons.forEach((icon, i) => {
    if ((i > 10) !== mode) return;
    const btn = document.createElement("button");
    btn.innerHTML = icon.length > 1 ? `<svg viewBox="0 0 13 13">${icon}</svg>` : icon;
    if (on.includes(i)) btn.className = "on";
    set.appendChild(btn);
  });
  if (!mode) {
    const fold = document.createElement("button");
    fold.className = "fold";
    fold.innerHTML = '<svg viewBox="0 0 5 13"><path d="M4 3L1 6.500 4 10z" fill="#b0c4de"/></svg>';
    set.appendChild(fold);
  }
});

// ---- price axis ----
function priceAxis(svg, x, top, bottom, right, first, last, y0, step, parts) {
  const clip = add(svg, "clipPath", { id: "clip" + x });
  rect(clip, x, top, 100, bottom - top, "#000");
  const g = add(svg, "g", { "clip-path": `url(#clip${x})` });
  line(g, x + .5, top, x + .5, bottom, AXIS);
  for (let p = first; p >= last; p--) {
    const y = Math.round(y0 + (first - p) * step);
    line(g, x, y + .5, x + 13, y + .5, AXIS);
    for (let k = 1; k < parts; k++) {
      const m = Math.round(y + k * step / parts) + .5;
      line(g, x + 1, m, x + 6, m, "#6a6a6a");
      if (p === first) line(g, x + 1, m - step, x + 6, m - step, "#6a6a6a");
    }
    add(g, "text", { x: right, y: y + 5, class: "price-label" }, p + ".00");
  }
}
function tag(svg, x, y, right, price, fill, color) {
  add(svg, "path", { d: `M${x} ${y}l12-8H${right + 4}v17H${x + 12}z`, fill });
  add(svg, "text", { x: right, y: y + 5, class: "tag-label", fill: color }, price);
}

// ---- MESM21: clusters ----
const left = document.getElementById("cluster");
line(left, 5, 251.5, 700, 251.5, "#7c8091");
line(left, 549, 316.5, 700, 316.5, "#6a6a6e");

// value + text colour (g, p, w) + cell fill (B blue, V violet)
// over: [from row, rows, r|t]; bar: [colour, y, height]
const columns = [
  { top: 279, v: "309g 247p 103g 227p 194w 380pV 90gV", over: [[.5, 1, "r"]] },
  { top: 332, v: "3g 180p 261pV 127p 433g 525wV", over: [[.5, 4, "r"]], bar: ["r", 343, 42] },
  { top: 300, v: "7g 144p 128gB 344w 159w 348g 207g 75wV", over: [[.5, 1, "r"], [5.5, 1, "t"]], bar: ["t", 312, 73] },
  { top: 279, v: "19g 466g 336g 475pV 144gB 18w", over: [[.5, 1, "r"], [3.5, 2, "t"]], bar: ["r", 312, 20] },
  { top: 289, v: "18g 124g 445p 426gB 421g", over: [[1.5, 1, "r"]], bar: ["t", 312, 20] },
  { top: 268, v: "198p 332g 307g 257p 426w", over: [], bar: ["t", 301, 20] },
  { top: 279, v: "376g 663g 443p 45pV", over: [[2.5, 1, "t"]], bar: ["r", 301, 20] },
  { top: 300, v: "1g 177pV 198pV 180pV 413w 288wV 34wV 142pV 65pV", over: [[.5, 4, "r"], [6.5, 2, "r"]], bar: ["r", 312, 73] },
  { top: 322, v: "203gB 125g 281g 348gB 199g 272g 60wV", over: [[.5, 1, "t"], [2.5, 2, "t"], [5.5, 1, "t"]], bar: ["t", 323, 62] },
  { top: 311, v: "28g 424p 642g 475p 4g", over: [[.5, 1, "r"], [3.5, 1, "t"]], bar: ["t", 323, 9] },
  { top: 311, v: "126gB 200w 299g 402w 224p 283p 16g", over: [[5.5, 1, "t"]], bar: ["r", 323, 19] },
  { top: 300, v: "15g 306g 539g 542p 54wV", over: [[.5, 1, "r"], [3.5, 1, "t"]] },
  { top: 311, v: "22g 314gB 305g 267g 254p 7w", over: [[.5, 1, "t"], [1.5, 1, "r"], [4.5, 1, "t"]], bar: ["t", 333, 9] },
  { top: 289, v: "57gB 455gB 83p 385g 448g 232p", over: [[1.5, 1, "t"], [2.5, 1, "r"]], bar: ["t", 301, 41] },
  { top: 279, v: "87gB 401g 206w 414g 397w 70pV", over: [] },
  { top: 257, v: "219gB 296g 381p 434p 198w", over: [], bar: ["t", 290, 20] },
  { top: 289, v: "185p 238p 341p 630g 93wV", over: [], bar: ["r", 290, 31] },
  { top: 268, v: "90p 400g 394g 413g 102wV", over: [], bar: ["t", 312, 9] }
];
const ROW = 10.7;
const textColors = { g: "#c0f888", p: "#f0c8c8", w: "#ffffff" };
const cellColors = { B: "#00739c", V: "#5b4bac" };
columns.forEach((col, i) => {
  const x = 31 * i - 7;
  const rows = col.v.split(" ");
  rect(left, x + .5, col.top + .5, 28, rows.length * ROW - 1, "#3b3b3b", "#999");
  if (col.bar) rect(left, x - 2, col.bar[1], 3, col.bar[2], col.bar[0] === "r" ? "#e8103c" : "#00d2d2");
  rows.forEach((row, k) => {
    const m = row.match(/(\d+)(.)(.?)/);
    const y = col.top + k * ROW;
    if (m[3]) rect(left, x + 1, y + 1, 27, ROW - 1, cellColors[m[3]]);
    add(left, "text", { x: x + 14.5, y: y + 9, class: "cell", fill: textColors[m[2]] }, m[1]);
  });
  col.over.forEach(([from, count, kind]) => {
    for (let k = 0; k < count; k++) {
      rect(left, x - .5, Math.round(col.top + (from + k) * ROW) + .5, 28, 10.5,
        kind === "r" ? "rgba(190,40,50,.5)" : "rgba(0,170,170,.5)",
        kind === "r" ? "#cc5858" : "#00cccc");
    }
  });
});

// deal markers
[["#00ffff", 67, 305, 6], ["#ffff00", 36, 358, 6], ["#ffff00", 67, 337, -6], ["#ffff00", 346, 327, -6],
 ["#ffff00", 377, 327, 6], ["#00ffff", 377, 347, -6], ["#00ffff", 377, 347, 6], ["#ffff00", 408, 305, -6],
 ["#00ffff", 439, 327, 6]].forEach(([fill, x, y, w]) => {
  if (w > 0) add(left, "path", { d: `M${x} ${y}l6-6v12z`, fill });
  else add(left, "path", { d: `M${x} ${y}l-6-6v12z`, fill });
});

line(left, 160, 401, 692, 294.5, "#0000ff", 4);
add(left, "path", { d: "M401 224h8v34l3-1-7 35-7-35 3 1z", fill: "#000", stroke: "#fff", "stroke-width": 4 });
add(left, "path", { d: "M442 404h8v-34l4 1-8-35-8 35 4-1z", fill: "#000", stroke: "#fff", "stroke-width": 4 });
add(left, "text", { x: 439, y: 200, class: "note" }, "Выход по тейку.");
add(left, "text", { x: 439, y: 218, class: "note" }, "Итог: +5п.");
rect(left, 346, 219, 1, 1, "#e02020");
rect(left, 284, 284, 1, 1, "#e02020");
add(left, "path", { d: "M541 101h12l-6 6z", fill: AXIS });
add(left, "text", { x: 554, y: 269, class: "countdown" }, "17:11:17");
add(left, "text", { x: 554, y: 282, class: "countdown" }, "821");

priceAxis(left, 692, 101, 525, 767, 4238, 4219, 111, 21.53, 2);
tag(left, 698, 251, 767, "4231.50", "#808080", "#000");
tag(left, 698, 316, 767, "4228.75", "#5a5a5a", "#3c3c3c");
line(left, 5, 526.5, 772, 526.5, AXIS);
line(left, 5, 547.5, 772, 547.5, AXIS);
[[":35", 14], ["08:09", 98], ["08:43", 188], ["09:24", 278], ["10:15", 368], ["11:01", 457]].forEach(([t, x]) => {
  add(left, "text", { x, y: 562, class: "time-label" }, t);
});
rect(left, 530.5, 549.5, 11, 15, "none", AXIS);
add(left, "text", { x: 762, y: 563, class: "date-label" }, "2021.06.09 11:21:26");

// ---- EPM21: volume profile, candles ----
const right = document.getElementById("candles");
const profile = [795, 808, 826, 844, 938, 906, 857, 859, 871, 840, 851, 976, 983,
  1036, 1083, 1065, 1083, 1056, 1123, 1120, 1119, 1175, 1128, 1157, 1180, 1174, 1087, 1107, 1143, 1118, 1126, 1057,
  969, 946, 899, 861, 833, 853, 832, 823, 801, 795, 790, 789, 788, 787];
profile.forEach((end, i) => {
  rect(right, 785.5, Math.round(152.3 + i * 4.03) + .5, end - 786, 2, "#303030", "#666");
});
line(right, 785, 177.5, 1300, 177.5, "#708090");
rect(right, 785.5, 249.5, 425, 2, "#5c6e1c", "#84b030");
rect(right, 1036.5, 205.5, 174, 2, "#3c3428", "#d8b890");
rect(right, 969.5, 281.5, 241, 2, "#3c3428", "#d8b890");

// the candle layer is drawn on a grid three times finer than the screen
const layer = add(right, "g", { transform: "translate(780 140) scale(.33333)" });
[[151, 379, 25, "r"], [208, 271, 17, "c"], [304, 271, 19, "r"], [361, 331, 17, "a"], [703, 283, 16, "k"],
 [742, 211, 17, "c"], [799, 259, 16, "k"], [837, 200, 23, "w"], [874, 148, 25, "w"], [910, 259, 17, "k"],
 [991, 223, 28, "r"], [1027, 355, 37, "r"], [1084, 295, 25, "w"], [1162, 88, 40, "t"], [1219, 112, 31, "r"]
].forEach(([cx, cy, r, kind]) => {
  const fill = { r: "#a84a4c", c: "#70d0d0", a: "#a4e4e0", k: "#e8a8a8", w: "#cfe8e4", t: "#58a8a8" }[kind];
  const stroke = { r: "#f07070", c: "#60e8f0", a: "#90f0f0", k: "#f0a0a0", w: "#d8f4f0", t: "#30d8d8" }[kind];
  add(layer, "circle", { cx, cy, r, fill, stroke, "stroke-width": 3, "fill-opacity": .9 });
});
// x, wick top, body top, body bottom, wick bottom, kind (d = doji)
const candles = `37 163 163 175 200 r|55 175 175 199 212 r|73 199 199 212 212 g|94 199 199 248 248 r|112 235 248 295 295 r
130 295 295 295 345 d|151 295 295 380 402 r|169 318 331 380 416 g|190 307 307 319 345 g|208 271 271 307 307 g
227 258 271 283 307 r|247 283 283 295 320 r|265 283 295 307 320 r|283 283 307 307 320 d|304 247 271 307 307 g
322 235 271 283 295 r|340 271 271 331 331 r|361 318 331 331 380 d|379 283 307 331 331 g|397 271 295 307 307 g
418 271 283 295 320 g|436 271 283 295 295 r|457 235 259 283 295 g|475 222 235 247 247 g|493 222 235 283 283 r
514 247 259 283 295 g|532 259 259 283 307 r|550 283 283 307 320 r|571 295 307 331 345 r|589 307 331 331 356 d
607 259 283 331 331 g|628 283 283 331 345 r|646 295 307 343 343 g|667 283 307 319 319 g|685 271 271 295 307 g
703 259 259 283 320 r|724 235 235 283 283 g|742 200 211 247 247 g|760 211 211 223 235 r|781 235 235 247 247 r
799 223 259 259 285 d|817 175 199 259 259 g|838 175 199 199 223 d|856 163 175 211 211 g|874 112 148 175 188 g
895 148 148 199 199 r|913 187 187 260 295 r|934 223 248 272 272 g|952 248 248 272 284 r|971 163 175 260 272 g
991 136 163 223 223 r|1009 200 223 247 247 r|1027 248 248 356 380 r|1048 355 367 403 464 r|1066 355 355 415 415 g
1084 284 295 344 356 g|1105 211 211 308 308 g|1123 211 223 223 248 d|1141 199 199 211 224 g|1162 63 88 199 199 g
1180 63 88 88 100 d|1201 40 64 88 100 g|1219 52 52 112 112 r|1237 100 100 112 149 g|1258 76 100 100 125 d
1276 76 88 112 112 r`;
candles.split(/[|\n]/).forEach(row => {
  const [x, high, top, bottom, low, kind] = row.split(" ");
  line(layer, x, high, x, low, "#999", 3);
  if (kind === "d") line(layer, x - 7, top, +x + 7, top, "#999", 3);
  else add(layer, "rect", { x: x - 6, y: top, width: 12, height: bottom - top, fill: kind === "r" ? "#dd1212" : "#48d048", stroke: "#999", "stroke-width": 3 });
});

// volume, negative = falling bar
const volumes = [-18, -17, -16, 12, -16, -27, 41, -41, 36, 19, 24, -17, -17, 17, 12, -31, 22, -13, 26, 15, 14, 10, -5,
  15, 9, -13, -9, 9, 14, -10, -10, 10, 13, 12, 12, 7, -20, 18, 19, -9, -18, -24, 24, 37, -35, 44, -22, -29, -26, -20,
  35, -54, -39, -75, -74, 42, 43, 43, -40, 42, 83, -38, 39, -61, -36, 36, -25];
const barStep = (1203 - 790) / (volumes.length - 2);
volumes.forEach((v, i) => {
  const h = Math.abs(v);
  rect(right, Math.round(790 + (i - 1) * barStep), 523 - h, 5, h, v < 0 ? "#a00000" : "#00b4b4");
});
add(right, "text", { x: 791, y: 453, fill: AXIS, "font-size": 12 }, "Volume 492");

priceAxis(right, 1288, 98, 434, 1362, 4236, 4216, 100, 16.17, 4);
line(right, 1288.5, 434, 1288.5, 525, AXIS);
tag(right, 1294, 177, 1362, "4231.25", "#808080", "#000");
add(right, "path", { d: "M1202 98h12l-6 6z", fill: AXIS });
add(right, "text", { x: 1265, y: 195, class: "countdown", "text-anchor": "end" }, "17:11:17");
add(right, "text", { x: 1265, y: 208, class: "countdown", "text-anchor": "end" }, "00:41");
line(right, 785, 435.5, 1364, 435.5, AXIS);
line(right, 785, 526.5, 1364, 526.5, AXIS);
line(right, 785, 547.5, 1364, 547.5, AXIS);
line(right, 1289, 498.5, 1301, 498.5, "#fff");
rect(right, 1303.5, 490.5, 51, 16, "#808080", "#fff");
add(right, "text", { x: 1352, y: 503, fill: "#fff", "font-size": 11, "text-anchor": "end" }, "705");
add(right, "path", { d: "M1040.500 98v429", stroke: "#fff", "stroke-dasharray": "3 3" });
rect(right, 978.5, 529.5, 123, 15, "#808080", "#fff");
add(right, "text", { x: 1040, y: 542, fill: "#fff", "text-anchor": "middle" }, "2021.06.09 10:51:02");
[["09:21", 848], ["10:03", 939], ["10:45", 1029], ["11:27", 1119]].forEach(([t, x]) => {
  add(right, "text", { x, y: 562, class: "time-label" }, t);
});
rect(right, 1171.5, 549.5, 37, 15, "none", AXIS);
add(right, "text", { x: 1358, y: 563, class: "date-label" }, "2021.06.09 12:09:09");
```
